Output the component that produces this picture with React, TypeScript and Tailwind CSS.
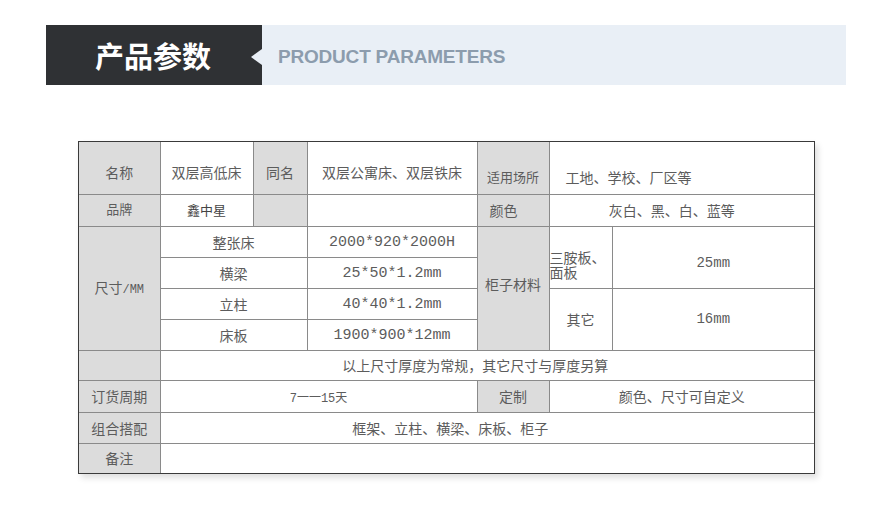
import React from 'react';

const cjk = "font-['Noto_Sans_CJK_SC',sans-serif]";
const mono = "font-['Liberation_Mono','Noto_Sans_CJK_SC',monospace]";

const label = 'bg-[#dcdcdc] text-center';
const cell = 'border border-[#8a8a8a] p-0';

export default function App() {
  return (
    <div className={`w-[879px] h-[526px] bg-white pt-[25px] pl-[46px] ${cjk}`}>
      {/* header bar */}
      <div className="flex h-[60px] w-[800px]">
        <div className="relative flex w-[216px] items-center justify-center bg-[#2f3134] pr-[2px]">
          <span className="text-[29px] font-bold leading-none text-white">产品参数</span>
          <span className="absolute right-0 top-[24px] h-0 w-0 border-y-[8px] border-r-[11px] border-y-transparent border-r-[#e9eff6]" />
        </div>
        <div className="flex flex-1 items-center bg-[#e9eff6] pl-[16px] pt-[4px]">
          <span className="font-['Liberation_Sans',Arial,sans-serif] text-[19px] font-bold tracking-[-0.2px] text-[#8c9cad]">
            PRODUCT PARAMETERS
          </span>
        </div>
      </div>

      {/* parameter table */}
      <div className="ml-[32px] mt-[56px] w-[737px] border border-[#3a3a3a] shadow-[3px_4px_6px_rgba(0,0,0,0.13)]">
        <table className="w-[735px] table-fixed border-collapse border-hidden text-[14px] leading-[16px] text-[#5c5c5c]">
          <colgroup>
            <col className="w-[81px]" />
            <col className="w-[93px]" />
            <col className="w-[54px]" />
            <col className="w-[170px]" />
            <col className="w-[72px]" />
            <col className="w-[63px]" />
            <col className="w-[202px]" />
          </colgroup>
          <tbody>
            <tr className="h-[52px]">
              <td className={`${cell} ${label} pt-[8px]`}>名称</td>
              <td className={`${cell} text-center pt-[8px]`}>双层高低床</td>
              <td className={`${cell} ${label} pt-[8px]`}>同名</td>
              <td className={`${cell} text-center pt-[8px]`}>双层公寓床、双层铁床</td>
              <td className={`${cell} ${label} pt-[18px] text-[13px]`}>适用场所</td>
              <td className={`${cell} pl-[16px] pt-[18px]`} colSpan={2}>工地、学校、厂区等</td>
            </tr>
            <tr className="h-[32px]">
              <td className={`${cell} ${label} pb-[2px] text-[13px]`}>品牌</td>
              <td className={`${cell} text-center text-[13px] text-[#444]`}>鑫中星</td>
              <td className={`${cell} bg-[#dcdcdc]`} />
              <td className={cell} />
              <td className={`${cell} bg-[#dcdcdc] pl-[12px]`}>颜色</td>
              <td className={`${cell} pr-[20px] text-center`} colSpan={2}>灰白、黑、白、蓝等</td>
            </tr>
            <tr className="h-[31px]">
              <td className={`${cell} ${label}`} rowSpan={4}>
                尺寸<span className={`${mono} text-[12px]`}>/MM</span>
              </td>
              <td className={`${cell} text-center`} colSpan={2}>整张床</td>
              <td className={`${cell} text-center ${mono} text-[15px] pt-[3px]`}>2000*920*2000H</td>
              <td className={`${cell} ${label} pb-[8px]`} rowSpan={4}>柜子材料</td>
              <td className={`${cell} align-top pt-[23px] leading-[15px]`} rowSpan={2}>三胺板、面板</td>
              <td className={`${cell} text-center ${mono} text-[14px] pt-[12px]`} rowSpan={2}>25mm</td>
            </tr>
            <tr className="h-[31px]">
              <td className={`${cell} text-center`} colSpan={2}>横梁</td>
              <td className={`${cell} text-center ${mono} text-[15px] pt-[3px]`}>25*50*1.2mm</td>
            </tr>
            <tr className="h-[31px]">
              <td className={`${cell} text-center`} colSpan={2}>立柱</td>
              <td className={`${cell} text-center ${mono} text-[15px] pt-[3px]`}>40*40*1.2mm</td>
              <td className={`${cell} text-center`} rowSpan={2}>其它</td>
              <td className={`${cell} text-center ${mono} text-[14px]`} rowSpan={2}>16mm</td>
            </tr>
            <tr className="h-[31px]">
              <td className={`${cell} text-center`} colSpan={2}>床板</td>
              <td className={`${cell} text-center ${mono} text-[15px] pt-[3px]`}>1900*900*12mm</td>
            </tr>
            <tr className="h-[30px]">
              <td className={`${cell} bg-[#dcdcdc]`} />
              <td className={`${cell} pr-[24px] text-center`} colSpan={6}>以上尺寸厚度为常规，其它尺寸与厚度另算</td>
            </tr>
            <tr className="h-[32px]">
              <td className={`${cell} ${label}`}>订货周期</td>
              <td className={`${cell} text-center text-[12px] pt-[3px]`} colSpan={3}>
                <span className={mono}>7</span>一一<span className={mono}>15</span>天
              </td>
              <td className={`${cell} ${label}`}>定制</td>
              <td className={`${cell} text-center`} colSpan={2}>颜色、尺寸可自定义</td>
            </tr>
            <tr className="h-[31px]">
              <td className={`${cell} ${label}`}>组合搭配</td>
              <td className={`${cell} pr-[74px] text-center`} colSpan={6}>框架、立柱、横梁、床板、柜子</td>
            </tr>
            <tr className="h-[30px]">
              <td className={`${cell} ${label}`}>备注</td>
              <td className={cell} colSpan={6} />
            </tr>
          </tbody>
        </table>
      </div>
    </div>
  );
}
